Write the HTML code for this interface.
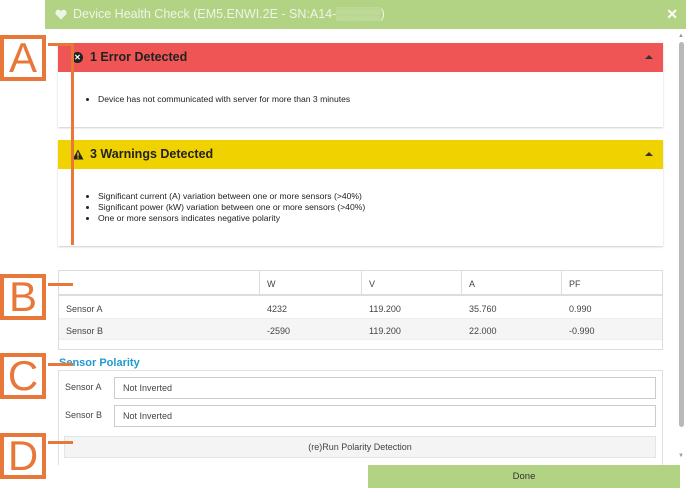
<!DOCTYPE html>
<html><head><meta charset="utf-8"><style>
*{margin:0;padding:0;box-sizing:border-box}
body{width:686px;height:488px;background:#fff;font-family:"Liberation Sans",Arial,sans-serif;position:relative;overflow:hidden;color:#333}
.abs{position:absolute}
.hdr{left:45px;top:0;width:641px;height:29px;background:#b2d383;color:#eef4e6;font-size:12.5px;line-height:29px;padding-left:28px}
.x{right:8px;top:0;color:#fff;font-size:14px;font-weight:bold;line-height:29px}
.panel{left:58px;width:605px;background:#fff;box-shadow:0 1px 2px rgba(0,0,0,.2)}
.ph{height:29px;font-size:12.5px;font-weight:bold;color:#222;line-height:29px;padding-left:32px;position:relative}
.ph .car{position:absolute;right:10px;top:12px;width:0;height:0;border-left:4px solid transparent;border-right:4px solid transparent;border-bottom:4px solid #333}
ul{font-size:8.6px;color:#222;padding-left:40px;line-height:11px}
.tbl{left:58px;top:270px;width:605px;height:80px;border:1px solid #ddd;font-size:9px;color:#444}
.tbl div{position:absolute}
.cell{border-right:1px solid #ddd}
.box{left:58px;top:370px;width:605px;height:95px;border-top:1px solid #e0e0e0;border-left:1px solid #e0e0e0;border-right:1px solid #e0e0e0;font-size:9px;color:#444}
.inp{border:1px solid #ccc;height:22px;line-height:20px;padding-left:8px;background:#fff}
.cal{border:4px solid #e8773a;color:#e8773a;font-size:42px;line-height:38px;text-align:center;width:46px;height:46px;background:#fff}
.ln{background:#e8773a}
</style></head><body>
<div class="abs hdr">Device Health Check (EM5.ENWI.2E - SN:A14-<span style="color:#d8e8c4">▒▒▒▒▒</span>)</div>
<svg class="abs" style="left:55px;top:9px" width="12" height="11" viewBox="0 0 12 11"><path d="M6 10.5L1.2 5.8C-0.2 4.3 0.3 1.2 3 0.8 4.5 0.6 5.5 1.6 6 2.4 6.5 1.6 7.5 0.6 9 0.8 11.7 1.2 12.2 4.3 10.8 5.8Z" fill="#eef4e6"/></svg>
<div class="abs x">✕</div>

<div class="abs panel" style="top:43px;height:84px">
 <div class="ph" style="background:#ef5555"><span style="position:absolute;left:14px;top:9px;width:11px;height:11px;border-radius:50%;background:#222;color:#fff;font-size:8px;line-height:11px;text-align:center">✕</span>1 Error Detected<span class="car"></span></div>
 <ul style="margin-top:22px"><li>Device has not communicated with server for more than 3 minutes</li></ul>
</div>
<div class="abs panel" style="top:140px;height:106px">
 <div class="ph" style="background:#f0d200"><svg style="position:absolute;left:14px;top:9px" width="12" height="11" viewBox="0 0 12 11"><path d="M6 0.5L11.5 10.5H0.5Z" fill="#222"/><rect x="5.3" y="3.5" width="1.4" height="4" fill="#f0d200"/><rect x="5.3" y="8.3" width="1.4" height="1.3" fill="#f0d200"/></svg>3 Warnings Detected<span class="car"></span></div>
 <ul style="margin-top:22px"><li>Significant current (A) variation between one or more sensors (&gt;40%)</li><li>Significant power (kW) variation between one or more sensors (&gt;40%)</li><li>One or more sensors indicates negative polarity</li></ul>
</div>

<div class="abs tbl">
 <div style="left:0;top:0;width:603px;height:25px;border-bottom:2px solid #ddd"></div>
 <div class="cell" style="left:0;top:0;width:201px;height:25px"></div>
 <div class="cell" style="left:201px;top:0;width:102px;height:25px"></div>
 <div class="cell" style="left:303px;top:0;width:100px;height:25px"></div>
 <div class="cell" style="left:403px;top:0;width:100px;height:25px"></div>
 <div style="left:0;top:47px;width:603px;height:22px;background:#f5f5f5;border-top:1px solid #eee;border-bottom:1px solid #eee"></div>
 <div style="left:208px;top:8px">W</div><div style="left:310px;top:8px">V</div><div style="left:410px;top:8px">A</div><div style="left:510px;top:8px">PF</div>
 <div style="left:7px;top:33px">Sensor A</div><div style="left:208px;top:33px">4232</div><div style="left:310px;top:33px">119.200</div><div style="left:410px;top:33px">35.760</div><div style="left:510px;top:33px">0.990</div>
 <div style="left:7px;top:55px">Sensor B</div><div style="left:208px;top:55px">-2590</div><div style="left:310px;top:55px">119.200</div><div style="left:410px;top:55px">22.000</div><div style="left:510px;top:55px">-0.990</div>
</div>

<div class="abs" style="left:59px;top:357px;font-size:11px;font-weight:bold;color:#1e9ad0">Sensor Polarity</div>
<div class="abs box">
 <div class="abs" style="left:6px;top:11px">Sensor A</div>
 <div class="abs inp" style="left:55px;top:6px;width:542px">Not Inverted</div>
 <div class="abs" style="left:6px;top:39px">Sensor B</div>
 <div class="abs inp" style="left:55px;top:34px;width:542px">Not Inverted</div>
 <div class="abs" style="left:5px;top:65px;width:592px;height:22px;background:#f4f4f4;border:1px solid #e4e4e4;text-align:center;line-height:20px">(re)Run Polarity Detection</div>
</div>

<div class="abs" style="left:678px;top:33px;width:6px;height:10px;font-size:6px;color:#999">▲</div>
<div class="abs" style="left:679px;top:42px;width:5px;height:385px;background:#b8b8b8;border-radius:3px"></div>
<div class="abs" style="left:678px;top:453px;font-size:6px;color:#999">▼</div>

<div class="abs" style="left:368px;top:465px;width:312px;height:23px;background:#b2d383;text-align:center;line-height:23px;font-size:9.5px;color:#333">Done</div>

<div class="abs cal" style="left:0;top:35px">A</div>
<div class="abs ln" style="left:48px;top:43px;width:25px;height:3px"></div>
<div class="abs ln" style="left:71px;top:43px;width:3px;height:202px"></div>
<div class="abs cal" style="left:0;top:274px">B</div>
<div class="abs ln" style="left:48px;top:283px;width:25px;height:3px"></div>
<div class="abs cal" style="left:0;top:353px">C</div>
<div class="abs ln" style="left:48px;top:363px;width:25px;height:3px"></div>
<div class="abs cal" style="left:0;top:433px">D</div>
<div class="abs ln" style="left:48px;top:441px;width:25px;height:3px"></div>
</body></html>
